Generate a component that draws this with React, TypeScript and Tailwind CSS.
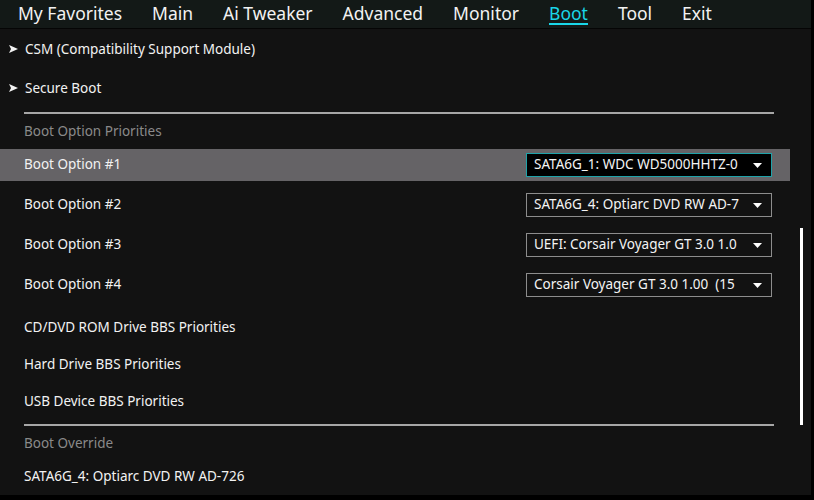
import React from "react";

const font = { fontFamily: '"Noto Sans", "Open Sans", sans-serif' };

function Arrow() {
  return (
    <svg width="9" height="8" viewBox="0 0 9 8" className="mr-[7px] shrink-0">
      <path d="M0 0 L9 4 L0 8 L2 4 Z" fill="#f2f2f2" />
    </svg>
  );
}

function Caret() {
  return (
    <svg width="9" height="5" viewBox="0 0 9 5">
      <path d="M0 0 H9 L4.5 5 Z" fill="#ffffff" />
    </svg>
  );
}

function Dropdown({ text, active }: { text: string; active?: boolean }) {
  return (
    <div
      className={
        "flex items-center h-[24px] w-[246px] pl-[7px] pr-[9px] " +
        (active ? "border border-[#1fa3aa] bg-black" : "border-[1.5px] border-[#8d8d8d]")
      }
    >
      <div className="flex-1 whitespace-pre text-[13.5px] text-[#f4f4f4] leading-none">{text}</div>
      <div className="ml-[6px] flex items-center">
        <Caret />
      </div>
    </div>
  );
}

export default function App() {
  const tabs = ["My Favorites", "Main", "Ai Tweaker", "Advanced", "Monitor", "Boot", "Tool", "Exit"];
  const opts = [
    "SATA6G_1: WDC WD5000HHTZ-0",
    "SATA6G_4: Optiarc DVD RW AD-7",
    "UEFI: Corsair Voyager GT 3.0 1.0",
    "Corsair Voyager GT 3.0 1.00  (15",
  ];
  return (
    <div className="w-[814px] h-[500px] bg-black overflow-hidden" style={font}>
      <div className="w-[811px] h-[495px] bg-[#121212] flex flex-col">
        <div className="h-[29px] bg-[#131917] border-b border-[#050505] flex items-start pl-[18px] gap-[30px] shrink-0">
          {tabs.map((t) => (
            <div key={t} className="flex flex-col pt-[2px]">
              <span
                className={
                  "text-[17.5px] leading-[22px] whitespace-nowrap " +
                  (t === "Boot" ? "text-[#1ad6e8]" : "text-[#f2f2f2]")
                }
              >
                {t}
              </span>
              {t === "Boot" && <div className="h-[2px] -mt-[1px] bg-[#1ad6e8]" />}
            </div>
          ))}
        </div>
        <div className="flex flex-1">
          <div className="w-[790px] flex flex-col text-[13.5px] text-[#f2f2f2]">
            <div className="h-[39px] flex items-center pl-[9px] pt-[1px]">
              <Arrow />
              <span>CSM (Compatibility Support Module)</span>
            </div>
            <div className="h-[39px] flex items-center pl-[9px] pt-[1px]">
              <Arrow />
              <span>Secure Boot</span>
            </div>
            <div className="ml-[24px] w-[750px] h-[2px] bg-[#a6a6a6] mt-[5px]" />
            <div className="h-[35px] flex items-center pl-[24px] text-[#8a8a8a]">Boot Option Priorities</div>
            {opts.map((o, i) => (
              <div
                key={i}
                className={
                  "h-[32px] flex items-center justify-between pl-[24px] pr-[18px] " +
                  (i === 0 ? "bg-[#656366]" : "mt-[8px]")
                }
              >
                <span className="-mt-[2px]">Boot Option #{i + 1}</span>
                <Dropdown text={o} active={i === 0} />
              </div>
            ))}
            <div className="mt-[7px] h-[37px] flex items-center pl-[24px] pt-[1px]">CD/DVD ROM Drive BBS Priorities</div>
            <div className="h-[37px] flex items-center pl-[24px] pt-[1px]">Hard Drive BBS Priorities</div>
            <div className="h-[37px] flex items-center pl-[24px] pt-[1px]">USB Device BBS Priorities</div>
            <div className="ml-[24px] w-[750px] h-[2px] bg-[#a6a6a6] mt-[5px]" />
            <div className="h-[34px] flex items-center pl-[24px] text-[#8a8a8a] pt-[1px]">Boot Override</div>
            <div className="h-[32px] flex items-center pl-[24px]">SATA6G_4: Optiarc DVD RW AD-726</div>
          </div>
          <div className="pl-[10px] pt-[199px]">
            <div className="w-[3px] h-[197px] bg-white" />
          </div>
        </div>
      </div>
    </div>
  );
}
